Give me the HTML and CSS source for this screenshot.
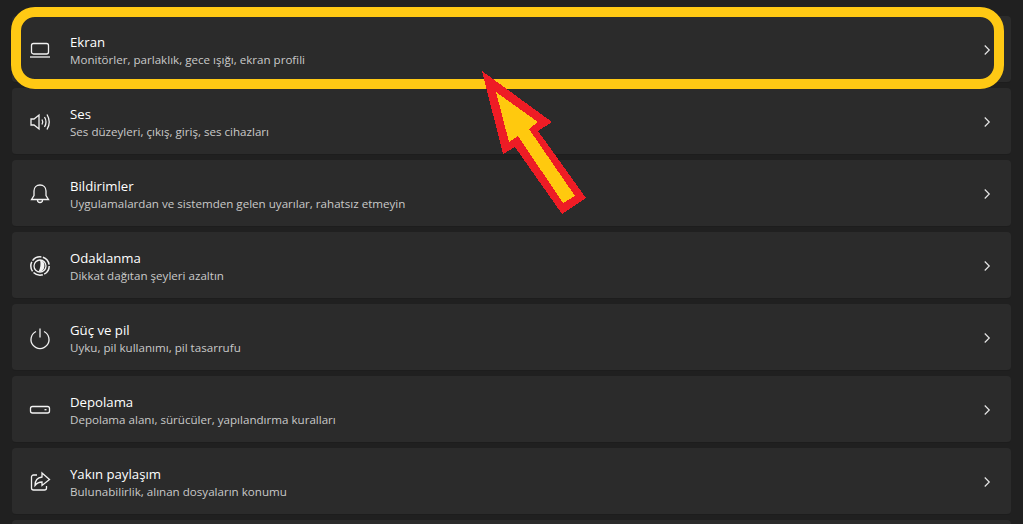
FILE: index.html
```html
<!DOCTYPE html>
<html lang="en">
<head>
  <meta charset="UTF-8">
  <title>Sistem</title>
  <link rel="stylesheet" href="styles.css">
</head>
<body>
  <main class="list">
    <a class="row">
      <svg class="icon" viewBox="0 0 20 20"><rect x="1.5" y="3.5" width="17" height="10.500" rx="2"/><path d="M0 17h20"/></svg>
      <div class="text"><h3>Ekran</h3><p>Monitörler, parlaklık, gece ışığı, ekran profili</p></div>
      <svg class="chevron" viewBox="0 0 16 16"><path d="M5 2l6 6-6 6"/></svg>
    </a>
    <a class="row">
      <svg class="icon" viewBox="0 0 20 20"><path d="M1 7h3l5-4v14l-5-4H1z"/><path d="M12 7.500q1.500 2.500 0 5"/><path d="M14.500 5q3 5 0 10"/><path d="M17 2.500q4.500 7.500 0 15"/></svg>
      <div class="text"><h3>Ses</h3><p>Ses düzeyleri, çıkış, giriş, ses cihazları</p></div>
      <svg class="chevron" viewBox="0 0 16 16"><path d="M5 2l6 6-6 6"/></svg>
    </a>
    <a class="row">
      <svg class="icon" viewBox="0 0 20 20"><path d="M10 1c-3.500 0-6 2.500-6 6v4.500L1.500 15.500h17L16 11.500V7c0-3.500-2.500-6-6-6z"/><path d="M7.500 16a2.500 2.500 0 0 0 5 0"/></svg>
      <div class="text"><h3>Bildirimler</h3><p>Uygulamalardan ve sistemden gelen uyarılar, rahatsız etmeyin</p></div>
      <svg class="chevron" viewBox="0 0 16 16"><path d="M5 2l6 6-6 6"/></svg>
    </a>
    <a class="row">
      <svg class="icon" viewBox="0 0 20 20"><circle class="dashed" cx="10" cy="10" r="9.200"/><circle cx="10" cy="10" r="6"/><path class="solid" d="M10 4a6 6 0 0 1-1.500 11.800Q11.500 10 10 4z"/></svg>
      <div class="text"><h3>Odaklanma</h3><p>Dikkat dağıtan şeyleri azaltın</p></div>
      <svg class="chevron" viewBox="0 0 16 16"><path d="M5 2l6 6-6 6"/></svg>
    </a>
    <a class="row">
      <svg class="icon" viewBox="0 0 20 20"><path d="M10 0.500v9"/><path d="M6 3.500a9 9 0 1 0 8 0"/></svg>
      <div class="text"><h3>Güç ve pil</h3><p>Uyku, pil kullanımı, pil tasarrufu</p></div>
      <svg class="chevron" viewBox="0 0 16 16"><path d="M5 2l6 6-6 6"/></svg>
    </a>
    <a class="row">
      <svg class="icon" viewBox="0 0 20 20"><rect x="0.500" y="6.500" width="19" height="6.500" rx="2"/><path d="M14.500 9.700h2"/></svg>
      <div class="text"><h3>Depolama</h3><p>Depolama alanı, sürücüler, yapılandırma kuralları</p></div>
      <svg class="chevron" viewBox="0 0 16 16"><path d="M5 2l6 6-6 6"/></svg>
    </a>
    <a class="row">
      <svg class="icon" viewBox="0 0 20 20"><path d="M7 3H3.500a2 2 0 0 0-2 2v11a2 2 0 0 0 2 2h11a2 2 0 0 0 2-2v-2"/><path d="M12 1l7.500 6.500-7.500 6v-3.500c-3 0-5 1-7 3.500 0-5 3-8 7-8.500z"/></svg>
      <div class="text"><h3>Yakın paylaşım</h3><p>Bulunabilirlik, alınan dosyaların konumu</p></div>
      <svg class="chevron" viewBox="0 0 16 16"><path d="M5 2l6 6-6 6"/></svg>
    </a>
    <a class="row row-cut"></a>
  </main>

  <!-- annotation drawn on top of the screenshot -->
  <div class="highlight"></div>
  <svg class="arrow" viewBox="0 0 1023 524">
    <polygon class="arrow-edge" points="482,71 552,122 538,131 586,198 562,214 515,147 503,154"/>
    <polygon class="arrow-fill" points="496,92 538,122 529,129 575,196 563,203 518,136 509,142"/>
  </svg>
</body>
</html>
```

FILE: styles.css
```css
* {
  margin: 0;
  padding: 0;
  box-sizing: border-box;
}
html, body {
  height: 524px;
  overflow: hidden;
}
body {
  font-family: "Open Sans", "Noto Sans", sans-serif;
  background: #202020;
  color: #fff;
  position: relative;
}
.list {
  display: flex;
  flex-direction: column;
  gap: 5px;
  padding: 16px 12px 0;
}
.row {
  display: flex;
  align-items: center;
  flex: none;
  height: 67px;
  padding: 2px 18px 0;
  background: #2b2b2b;
  border-radius: 4px;
  border-bottom: 1px solid #1d1d1d;
}
.row-cut {
  height: 4px;
  padding: 0;
  border-bottom: 0;
  border-radius: 4px 4px 0 0;
}
.icon {
  width: 20px;
  height: 20px;
  flex: none;
  fill: none;
  stroke: #f2f2f2;
  stroke-width: 1.3;
  overflow: visible;
}
.icon .dashed {
  stroke-dasharray: 10 1.500;
  stroke-width: 1.500;
}
.icon .solid {
  fill: #f2f2f2;
  stroke: none;
}
.text {
  margin-left: 20px;
  flex: 1;
  display: flex;
  flex-direction: column;
}
.text h3 {
  font-size: 13.200px;
  font-weight: 400;
  line-height: 18px;
}
.text p {
  font-size: 11.600px;
  line-height: 16px;
  color: #c9c9c9;
  margin-top: 1px;
}
.chevron {
  width: 12px;
  height: 12px;
  flex: none;
  fill: none;
  stroke: #e6e6e6;
  stroke-width: 1.600;
}
.highlight {
  position: absolute;
  left: 11px;
  top: 7px;
  width: 993px;
  height: 82px;
  border: 10px solid #ffc914;
  border-radius: 24px;
}
.arrow {
  position: absolute;
  left: 0;
  top: 0;
  width: 1023px;
  height: 524px;
  shape-rendering: crispEdges;
}
.arrow-edge {
  fill: #ee1c25;
}
.arrow-fill {
  fill: #ffc90e;
}
```
